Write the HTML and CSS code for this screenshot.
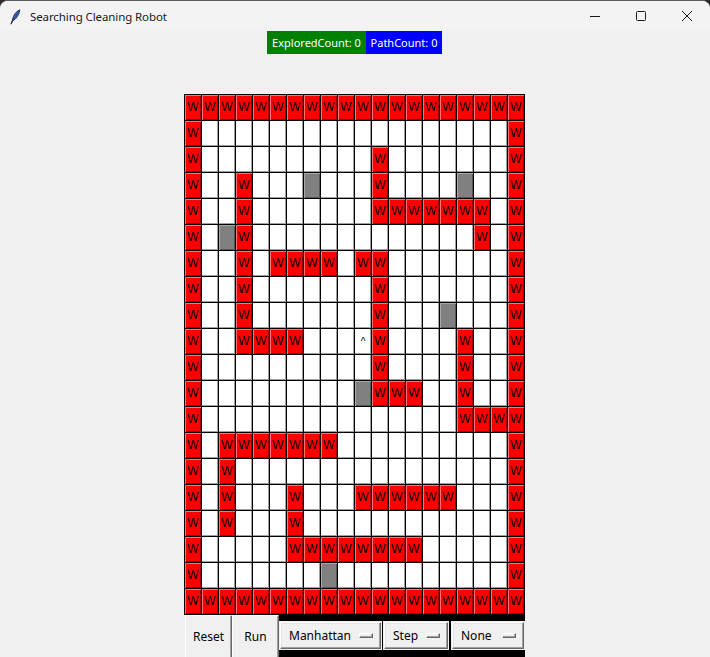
FILE: index.html
```html
<!DOCTYPE html>
<html>
<head>
<meta charset="utf-8">
<title>Searching Cleaning Robot</title>
<link rel="stylesheet" href="styles.css">
</head>
<body>
<div class="window">
  <div class="titlebar">
    <svg class="feather" width="12" height="16" viewBox="0 0 12 16"><path d="M10.8 0.8 C7.2 2.4 4.2 6 3.4 11.2 L2 15.2 L3.6 11.8 C7.4 10 10 6.2 10.8 0.8 Z" fill="#3d6fd6" stroke="#1b2747" stroke-width="0.9" stroke-linejoin="round"/><path d="M9.6 2.6 L3.6 11.6" stroke="#1b2747" stroke-width="0.6"/></svg>
    <span class="title">Searching Cleaning Robot</span>
    <span class="spacer"></span>
    <span class="ctl"><svg width="12" height="12" viewBox="0 0 12 12"><path d="M1 6.5 H11" stroke="#1a1a1a" stroke-width="1"/></svg></span>
    <span class="ctl"><svg width="12" height="12" viewBox="0 0 12 12"><rect x="1.5" y="1.5" width="9" height="9" rx="1" fill="none" stroke="#1a1a1a" stroke-width="1"/></svg></span>
    <span class="ctl"><svg width="12" height="12" viewBox="0 0 12 12"><path d="M1 1 L11 11 M11 1 L1 11" stroke="#1a1a1a" stroke-width="1"/></svg></span>
  </div>
  <div class="counts">
    <span class="explored">ExploredCount: 0</span><span class="path">PathCount: 0</span>
  </div>
  <div class="grid">
    <div class="w">W</div><div class="w">W</div><div class="w">W</div><div class="w">W</div><div class="w">W</div><div class="w">W</div><div class="w">W</div><div class="w">W</div><div class="w">W</div><div class="w">W</div><div class="w">W</div><div class="w">W</div><div class="w">W</div><div class="w">W</div><div class="w">W</div><div class="w">W</div><div class="w">W</div><div class="w">W</div><div class="w">W</div><div class="w">W</div>
    <div class="w">W</div><div></div><div></div><div></div><div></div><div></div><div></div><div></div><div></div><div></div><div></div><div></div><div></div><div></div><div></div><div></div><div></div><div></div><div></div><div class="w">W</div>
    <div class="w">W</div><div></div><div></div><div></div><div></div><div></div><div></div><div></div><div></div><div></div><div></div><div class="w">W</div><div></div><div></div><div></div><div></div><div></div><div></div><div></div><div class="w">W</div>
    <div class="w">W</div><div></div><div></div><div class="w">W</div><div></div><div></div><div></div><div class="o"></div><div></div><div></div><div></div><div class="w">W</div><div></div><div></div><div></div><div></div><div class="o"></div><div></div><div></div><div class="w">W</div>
    <div class="w">W</div><div></div><div></div><div class="w">W</div><div></div><div></div><div></div><div></div><div></div><div></div><div></div><div class="w">W</div><div class="w">W</div><div class="w">W</div><div class="w">W</div><div class="w">W</div><div class="w">W</div><div class="w">W</div><div></div><div class="w">W</div>
    <div class="w">W</div><div></div><div class="o"></div><div class="w">W</div><div></div><div></div><div></div><div></div><div></div><div></div><div></div><div></div><div></div><div></div><div></div><div></div><div></div><div class="w">W</div><div></div><div class="w">W</div>
    <div class="w">W</div><div></div><div></div><div class="w">W</div><div></div><div class="w">W</div><div class="w">W</div><div class="w">W</div><div class="w">W</div><div></div><div class="w">W</div><div class="w">W</div><div></div><div></div><div></div><div></div><div></div><div></div><div></div><div class="w">W</div>
    <div class="w">W</div><div></div><div></div><div class="w">W</div><div></div><div></div><div></div><div></div><div></div><div></div><div></div><div class="w">W</div><div></div><div></div><div></div><div></div><div></div><div></div><div></div><div class="w">W</div>
    <div class="w">W</div><div></div><div></div><div class="w">W</div><div></div><div></div><div></div><div></div><div></div><div></div><div></div><div class="w">W</div><div></div><div></div><div></div><div class="o"></div><div></div><div></div><div></div><div class="w">W</div>
    <div class="w">W</div><div></div><div></div><div class="w">W</div><div class="w">W</div><div class="w">W</div><div class="w">W</div><div></div><div></div><div></div><div class="r">^</div><div class="w">W</div><div></div><div></div><div></div><div></div><div class="w">W</div><div></div><div></div><div class="w">W</div>
    <div class="w">W</div><div></div><div></div><div></div><div></div><div></div><div></div><div></div><div></div><div></div><div></div><div class="w">W</div><div></div><div></div><div></div><div></div><div class="w">W</div><div></div><div></div><div class="w">W</div>
    <div class="w">W</div><div></div><div></div><div></div><div></div><div></div><div></div><div></div><div></div><div></div><div class="o"></div><div class="w">W</div><div class="w">W</div><div class="w">W</div><div></div><div></div><div class="w">W</div><div></div><div></div><div class="w">W</div>
    <div class="w">W</div><div></div><div></div><div></div><div></div><div></div><div></div><div></div><div></div><div></div><div></div><div></div><div></div><div></div><div></div><div></div><div class="w">W</div><div class="w">W</div><div class="w">W</div><div class="w">W</div>
    <div class="w">W</div><div></div><div class="w">W</div><div class="w">W</div><div class="w">W</div><div class="w">W</div><div class="w">W</div><div class="w">W</div><div class="w">W</div><div></div><div></div><div></div><div></div><div></div><div></div><div></div><div></div><div></div><div></div><div class="w">W</div>
    <div class="w">W</div><div></div><div class="w">W</div><div></div><div></div><div></div><div></div><div></div><div></div><div></div><div></div><div></div><div></div><div></div><div></div><div></div><div></div><div></div><div></div><div class="w">W</div>
    <div class="w">W</div><div></div><div class="w">W</div><div></div><div></div><div></div><div class="w">W</div><div></div><div></div><div></div><div class="w">W</div><div class="w">W</div><div class="w">W</div><div class="w">W</div><div class="w">W</div><div class="w">W</div><div></div><div></div><div></div><div class="w">W</div>
    <div class="w">W</div><div></div><div class="w">W</div><div></div><div></div><div></div><div class="w">W</div><div></div><div></div><div></div><div></div><div></div><div></div><div></div><div></div><div></div><div></div><div></div><div></div><div class="w">W</div>
    <div class="w">W</div><div></div><div></div><div></div><div></div><div></div><div class="w">W</div><div class="w">W</div><div class="w">W</div><div class="w">W</div><div class="w">W</div><div class="w">W</div><div class="w">W</div><div class="w">W</div><div></div><div></div><div></div><div></div><div></div><div class="w">W</div>
    <div class="w">W</div><div></div><div></div><div></div><div></div><div></div><div></div><div></div><div class="o"></div><div></div><div></div><div></div><div></div><div></div><div></div><div></div><div></div><div></div><div></div><div class="w">W</div>
    <div class="w">W</div><div class="w">W</div><div class="w">W</div><div class="w">W</div><div class="w">W</div><div class="w">W</div><div class="w">W</div><div class="w">W</div><div class="w">W</div><div class="w">W</div><div class="w">W</div><div class="w">W</div><div class="w">W</div><div class="w">W</div><div class="w">W</div><div class="w">W</div><div class="w">W</div><div class="w">W</div><div class="w">W</div><div class="w">W</div>
  </div>
  <div class="controls">
    <button class="btn btn-reset">Reset</button>
    <button class="btn btn-run">Run</button>
    <div class="opt opt-heur"><span>Manhattan</span><i class="ind"></i></div>
    <div class="opt opt-mode"><span>Step</span><i class="ind"></i></div>
    <div class="opt opt-none"><span>None</span><i class="ind"></i></div>
  </div>
</div>
</body>
</html>
```
FILE: styles.css
```css
html, body {
  margin: 0;
  padding: 0;
  background: #2a2a2a;
  height: 100%;
  overflow: hidden;
}
.window {
  height: 657px;
  background: #f0f0f0;
  border-radius: 8px 8px 0 0;
  border-top: 1px solid #5c5c5c;
  box-sizing: border-box;
  font-family: "Noto Sans", "Open Sans", sans-serif;
  color: #000;
}
.titlebar {
  height: 30px;
  display: flex;
  align-items: center;
  background: #f3f3f3;
  border-radius: 8px 8px 0 0;
}
.feather {
  margin-left: 9px;
  margin-top: 1px;
}
.title {
  margin-left: 9px;
  font-size: 11.5px;
  color: #1a1a1a;
  letter-spacing: -0.1px;
}
.spacer { flex: 1; }
.ctl {
  width: 46px;
  height: 30px;
  display: flex;
  align-items: center;
  justify-content: center;
}
.counts {
  display: flex;
  height: 23px;
  padding-left: 267px;
  font-size: 11px;
  line-height: 23px;
  color: #fff;
}
.explored {
  background: #008000;
  width: 99px;
  text-align: center;
}
.path {
  background: #0000ff;
  width: 76px;
  text-align: center;
}
.grid {
  display: grid;
  grid-template-columns: repeat(20, 16px);
  grid-auto-rows: 25px;
  gap: 1px;
  padding: 1px;
  background: #000;
  width: max-content;
  margin: 40px 0 0 184px;
}
.grid > div {
  background: #fff;
  box-shadow: inset -1px -1px 0 #a0a0a0;
  font-family: "Liberation Sans", Arial, sans-serif;
  font-size: 12px;
  line-height: 25px;
  text-align: center;
  color: #000;
}
.grid > .w {
  background: #ff0000;
  box-shadow: inset 1px 1px 0 #ff7070, inset -1px -1px 0 #a00000;
}
.grid > .o {
  background: #808080;
  box-shadow: inset 1px 1px 0 #a8a8a8, inset -1px -1px 0 #555;
}
.grid > .r {
  font-size: 10px;
}
.controls {
  display: flex;
  align-items: flex-start;
  width: 340px;
  height: 44px;
  margin-left: 185px;
  background: #000;
}
.btn {
  width: 47px;
  height: 44px;
  margin: 0;
  padding: 0 0 2px 0;
  background: #f0f0f0;
  border: 1px solid;
  border-color: #fff #696969 #696969 #fff;
  box-shadow: inset -1px -1px 0 #a0a0a0;
  font-family: "Noto Sans", "Open Sans", sans-serif;
  font-size: 12px;
  color: #000;
}
.opt {
  box-sizing: border-box;
  height: 27px;
  margin-top: 7px;
  display: flex;
  align-items: center;
  justify-content: space-between;
  padding: 0 7px 0 8px;
  background: #f0f0f0;
  border: 1px solid;
  border-color: #fff #696969 #696969 #fff;
  box-shadow: inset -1px -1px 0 #a0a0a0, inset 1px 1px 0 #e3e3e3;
  font-size: 12px;
  outline: 1px solid #f0f0f0;
}
.opt-heur { width: 101px; margin-left: 1px; }
.opt-mode { width: 64px; margin-left: 3px; }
.opt-none { width: 72px; margin-left: 4px; }
.ind {
  width: 14px;
  height: 5px;
  box-sizing: border-box;
  border: 1px solid;
  border-color: #fff #696969 #696969 #fff;
  background: #f0f0f0;
  box-shadow: inset -1px -1px 0 #a0a0a0;
}
```
